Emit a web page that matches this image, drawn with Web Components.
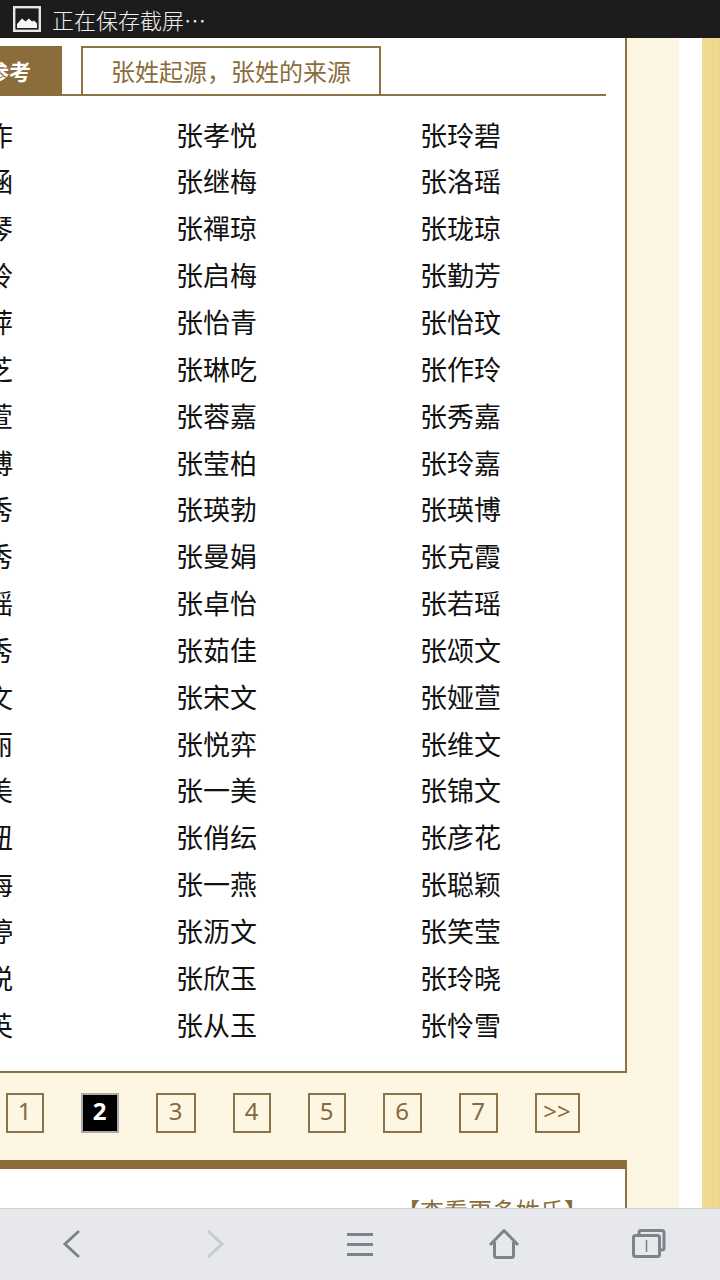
<!DOCTYPE html>
<html lang="zh">
<head>
<meta charset="utf-8">
<title>张姓起源</title>
<style>
html, body { margin: 0; padding: 0; height: 1280px; overflow: hidden; background: #fff; }
body { display: flex; flex-direction: column; font-family: "Noto Sans CJK SC", "Noto Sans", sans-serif; }
</style>
</head>
<body>
<status-bar>正在保存截屏⋯</status-bar>
<page-view>
  <name-panel>
    <tab-strip active="参考" other="张姓起源，张姓的来源"></tab-strip>
    <name-table></name-table>
  </name-panel>
  <page-list></page-list>
  <more-panel>【查看更多姓氏】</more-panel>
</page-view>
<browser-bar></browser-bar>

<script>
class StatusBar extends HTMLElement {
    constructor() {
        super();
        this.attachShadow({ mode: 'open' });
        this.shadowRoot.innerHTML = `
        <style>
        :host { display: flex; flex: none; align-items: center; gap: 11px; height: 38px; padding-left: 13px; background: #1c1c1c; color: #f0f0f0; font-size: 22px; font-weight: 300; }
        svg { display: block; margin-top: -1px; }
        </style>
        <svg width="28" height="26" viewBox="0 0 28 26">
            <rect x="1.2" y="1.2" width="25.6" height="23.6" fill="none" stroke="#e6e6e6" stroke-width="2.4"/>
            <path d="M4 22v-4l5-5.500 3.500 3 3.500-3 3 3 2-1 3 3v4.500z" fill="#f5f5f5"/>
        </svg>
        <slot></slot>
        `;
    }
}
customElements.define('status-bar', StatusBar);

class PageView extends HTMLElement {
    constructor() {
        super();
        this.attachShadow({ mode: 'open' });
        this.shadowRoot.innerHTML = `
        <style>
        :host { display: flex; flex: 1; min-height: 0; overflow: hidden; background: #fff; }
        .main { flex: none; width: 640px; margin-left: -13px; overflow: hidden; background: #fdf6e3; }
        .cream { flex: none; width: 52px; background: repeating-linear-gradient(90deg, #fdf6e3 0 3px, #fcf5e1 3px 6px); }
        .gap { flex: none; width: 23px; background: #fff; }
        .paper { flex: none; width: 18px; background: repeating-linear-gradient(90deg, #efda92 0 3px, #eed88e 3px 6px); }
        </style>
        <div class="main"><slot></slot></div>
        <div class="cream"></div>
        <div class="gap"></div>
        <div class="paper"></div>
        `;
    }
}
customElements.define('page-view', PageView);

class NamePanel extends HTMLElement {
    constructor() {
        super();
        this.attachShadow({ mode: 'open' });
        this.shadowRoot.innerHTML = `
        <style>
        :host { display: block; background: #fff; border-right: 2px solid #8b7248; border-bottom: 2px solid #8b7248; padding-top: 8px; }
        </style>
        <slot></slot>
        `;
    }
}
customElements.define('name-panel', NamePanel);

class TabStrip extends HTMLElement {
    constructor() {
        super();
        this.attachShadow({ mode: 'open' });
        this.shadowRoot.innerHTML = `
        <style>
        :host { display: flex; gap: 19px; height: 50px; box-sizing: border-box; margin-right: 19px; border-bottom: 2px solid #8b7248; }
        div { display: flex; align-items: center; box-sizing: border-box; height: 50px; }
        .on { width: 75px; padding-bottom: 3px; background: #8b6d3c; color: #fff; font-size: 22px; font-weight: 700; }
        .off { justify-content: center; width: 300px; border: 2px solid #8f7344; padding-bottom: 2px; color: #8a6d3b; font-size: 24px; background: #fff; }
        </style>
        <div class="on">${this.getAttribute('active')}</div>
        <div class="off">${this.getAttribute('other')}</div>
        `;
    }
}
customElements.define('tab-strip', TabStrip);

// first column is scrolled off the left edge, only its last character shows
const NAMES = [
    ['作', '张孝悦', '张玲碧'], ['涵', '张继梅', '张洛瑶'], ['琴', '张禪琼', '张珑琼'], ['玲', '张启梅', '张勤芳'],
    ['萍', '张怡青', '张怡玟'], ['芝', '张琳吃', '张作玲'], ['萱', '张蓉嘉', '张秀嘉'], ['博', '张莹柏', '张玲嘉'],
    ['秀', '张瑛勃', '张瑛博'], ['秀', '张曼娟', '张克霞'], ['瑶', '张卓怡', '张若瑶'], ['秀', '张茹佳', '张颂文'],
    ['文', '张宋文', '张娅萱'], ['丽', '张悦弈', '张维文'], ['美', '张一美', '张锦文'], ['纽', '张俏纭', '张彦花'],
    ['海', '张一燕', '张聪颖'], ['婷', '张沥文', '张笑莹'], ['悦', '张欣玉', '张玲晓'], ['英', '张从玉', '张怜雪']
];

class NameTable extends HTMLElement {
    constructor() {
        super();
        this.attachShadow({ mode: 'open' });
        const cells = NAMES.map(row => row.map(n => `<span>${n}</span>`).join('')).join('');
        this.shadowRoot.innerHTML = `
        <style>
        :host { display: grid; grid-template-columns: 190px 244px 1fr; grid-auto-rows: 46.85px; margin-left: -1px; padding: 15.6px 0 22.4px; color: #111; font-size: 27px; }
        span { line-height: 46.85px; white-space: nowrap; }
        </style>
        ${cells}
        `;
    }
}
customElements.define('name-table', NameTable);

class PageList extends HTMLElement {
    constructor() {
        super();
        this.attachShadow({ mode: 'open' });
        const pages = [['1', 38], ['2', 38], ['3', 40], ['4', 38], ['5', 38], ['6', 39], ['7', 39], ['>>', 45]];
        const links = pages.map(([t, w]) => `<a class="${t === '2' ? 'cur' : ''}" style="width:${w}px">${t.replace(/>/g, '&gt;')}</a>`).join('');
        this.shadowRoot.innerHTML = `
        <style>
        :host { display: flex; gap: 37px; box-sizing: border-box; height: 87px; padding: 20px 0 0 19px; }
        a { display: flex; align-items: center; justify-content: center; box-sizing: border-box; height: 40px; padding: 0 1px 5px 0; border: 2px solid #8b7248; color: #85693c; font: 24px "Noto Sans", sans-serif; }
        .cur { background: #000; border-color: #aaa; color: #fff; font-weight: 700; }
        </style>
        ${links}
        `;
    }
}
customElements.define('page-list', PageList);

class MorePanel extends HTMLElement {
    constructor() {
        super();
        this.attachShadow({ mode: 'open' });
        this.shadowRoot.innerHTML = `
        <style>
        :host { display: block; height: 200px; background: #fff; border-top: 9px solid #8b6d3c; border-right: 2px solid #8b7248; padding: 29px 37px 0 0; text-align: right; color: #8a6d3b; font-size: 24px; line-height: 24px; }
        </style>
        <slot></slot>
        `;
    }
}
customElements.define('more-panel', MorePanel);

class BrowserBar extends HTMLElement {
    constructor() {
        super();
        this.attachShadow({ mode: 'open' });
        this.shadowRoot.innerHTML = `
        <style>
        :host { display: grid; flex: none; grid-template-columns: repeat(5, 144px); align-items: center; justify-items: center; box-sizing: border-box; height: 72px; padding-bottom: 2px; border-top: 1px solid #cfd0d2; background: #e7e8eb; }
        svg { display: block; fill: none; stroke: #7d828c; stroke-width: 3; }
        </style>
        <svg width="36" height="36" viewBox="0 0 36 36"><path d="M25 5L11 18l14 13"/></svg>
        <svg width="36" height="36" viewBox="0 0 36 36" style="stroke:#c6c9cd"><path d="M10 5l14 13-14 13"/></svg>
        <svg width="36" height="36" viewBox="0 0 36 36"><path d="M5 8.500h26M5 18.500h26M5 28.500h26"/></svg>
        <svg width="36" height="36" viewBox="0 0 36 36"><path d="M4 19L18 4.500 32 19M8.500 16v13.500a2 2 0 0 0 2 2h15a2 2 0 0 0 2-2V16" stroke-linejoin="round"/></svg>
        <svg width="36" height="36" viewBox="0 0 36 36"><path d="M9 8V6.500a2 2 0 0 1 2-2h21a2 2 0 0 1 2 2V22a2 2 0 0 1-2 2H30"/><rect x="3.500" y="9.500" width="26" height="21" rx="2"/><path d="M16.500 14v12" stroke-width="1.600"/></svg>
        `;
    }
}
customElements.define('browser-bar', BrowserBar);
</script>
</body>
</html>
